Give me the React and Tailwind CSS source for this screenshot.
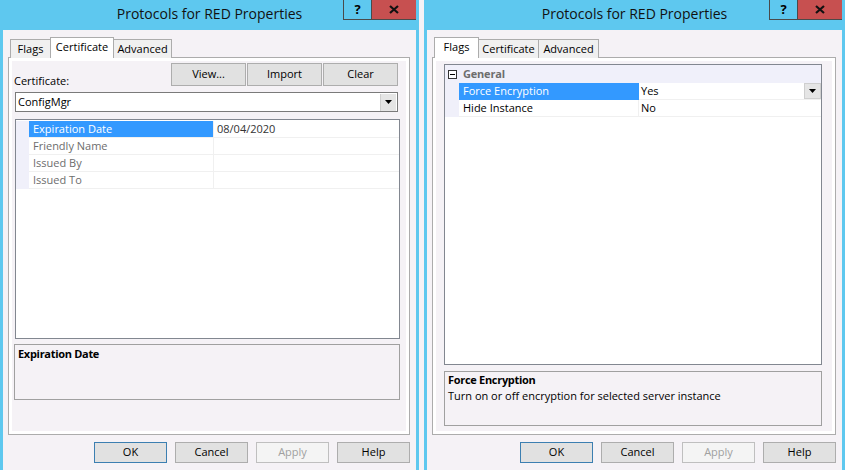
import React from 'react';

// Windows Server 2012 style "Protocols for RED Properties" dialogs

function Caret() {
  return (
    <svg width="7" height="4" viewBox="0 0 7 4">
      <path d="M0 0h7L3.5 4z" fill="#000" />
    </svg>
  );
}

function TitleBar({ title }) {
  return (
    <div className="grid grid-cols-[73px_1fr_73px] h-[30px]">
      <div />
      <div className="text-center text-[14px] leading-[20px] pt-[4px] text-[#111]">{title}</div>
      <div className="flex items-start">
        <div className="w-[28px] h-[20px] border-l border-b border-[#4a4a4a] flex items-center justify-center text-[13px] font-bold text-black">
          ?
        </div>
        <div className="w-[45px] h-[20px] bg-[#c75050] border-b border-l border-[#4a4a4a] flex items-center justify-center">
          <svg width="10" height="9" viewBox="0 0 10 9">
            <path d="M1 1l8 7M9 1L1 8" stroke="#111" strokeWidth="2.2" />
          </svg>
        </div>
      </div>
    </div>
  );
}

function Tabs({ tabs, active }) {
  return (
    <div className="flex items-end h-[21px] ml-[7px]">
      {tabs.map((t, i) =>
        t.name === active ? (
          <div
            key={t.name}
            style={{ width: t.w }}
            className={`relative z-10 h-[21px] bg-white border border-b-0 border-[#acacac] text-center text-[11px] leading-[18px] ${i > 0 ? '-ml-px' : ''}`}
          >
            {t.name}
          </div>
        ) : (
          <div
            key={t.name}
            style={{ width: t.w }}
            className={`h-[19px] bg-[#f0f0f0] border border-b-0 border-[#acacac] text-center text-[11px] leading-[18px] ${i > 0 ? '-ml-px' : ''}`}
          >
            {t.name}
          </div>
        )
      )}
    </div>
  );
}

function Button({ children, kind }) {
  let cls = 'bg-[#e1e1e1] border-[#adadad] text-black';
  if (kind === 'default') cls = 'bg-[#e1e1e1] border-[#3c7fb1] text-black';
  if (kind === 'disabled') cls = 'bg-[#f4f4f4] border-[#bfbfbf] text-[#a0a0a0]';
  return (
    <div className={`w-[73px] h-[21px] border ${cls} flex items-center justify-center text-[11px]`}>
      {children}
    </div>
  );
}

function Footer() {
  return (
    <div className="flex justify-end gap-[8px] pr-[6px] mt-[7px]">
      <Button kind="default">OK</Button>
      <Button>Cancel</Button>
      <Button kind="disabled">Apply</Button>
      <Button>Help</Button>
    </div>
  );
}

function Window({ width, tabs, active, children }) {
  return (
    <div style={{ width }} className="h-full shrink-0 bg-[#5ec8ef] px-[3px] flex flex-col">
      <TitleBar title="Protocols for RED Properties" />
      <div className="flex-1 bg-[#f5f2f6] pt-[7px]">
        <Tabs tabs={tabs} active={active} />
        <div className="-mt-px ml-[5px] mr-[6px] h-[378px] border border-[#acacac] bg-white p-[3px]">
          <div className="h-full bg-[#f5f2f6] flex flex-col">{children}</div>
        </div>
        <Footer />
      </div>
    </div>
  );
}

function CertificatePage() {
  const rows = [
    { label: 'Expiration Date', value: '08/04/2020', selected: true },
    { label: 'Friendly Name', value: '' },
    { label: 'Issued By', value: '' },
    { label: 'Issued To', value: '' },
  ];
  return (
    <>
      <div className="flex justify-between items-end mt-[2px] h-[23px] pl-[2px] pr-[8px]">
        <div className="text-[11px] leading-[14px] -mb-[2px]">Certificate:</div>
        <div className="flex gap-[1px]">
          <div className="w-[75px] h-[23px] bg-[#e1e1e1] border border-[#adadad] flex items-center justify-center text-[11px]">View...</div>
          <div className="w-[75px] h-[23px] bg-[#e1e1e1] border border-[#adadad] flex items-center justify-center text-[11px]">Import</div>
          <div className="w-[75px] h-[23px] bg-[#e1e1e1] border border-[#adadad] flex items-center justify-center text-[11px]">Clear</div>
        </div>
      </div>
      <div className="mt-[6px] ml-[3px] mr-[8px] h-[20px] bg-white border border-[#7a7a7a] flex items-center">
        <div className="flex-1 pl-[2px] text-[11px]">ConfigMgr</div>
        <div className="w-[16px] h-[17px] mr-px bg-[#e5e5e5] border-l border-[#cfcfcf] flex items-center justify-center">
          <Caret />
        </div>
      </div>
      <div className="mt-[7px] ml-[3px] mr-[6px] h-[220px] bg-white border border-[#828790] pt-px">
        {rows.map((r) => (
          <div key={r.label} className="flex h-[17px] text-[11px]">
            <div className="w-[13px] bg-[#f0f0fa]" />
            <div
              className={`w-[185px] pl-[4px] leading-[16px] border-b border-r border-[#f0f0f0] ${
                r.selected ? 'bg-[#3399ff] text-white border-[#3399ff]' : 'text-[#6d6d6d]'
              }`}
            >
              {r.label}
            </div>
            <div className="flex-1 pl-[3px] leading-[16px] border-b border-[#f0f0f0] text-[#333]">{r.value}</div>
          </div>
        ))}
      </div>
      <div className="mt-[5px] ml-[2px] mr-[6px] h-[56px] border border-[#a0a0a0] pl-[3px] pt-px">
        <div className="text-[11px] font-bold leading-[16px] tracking-[-0.3px]">Expiration Date</div>
      </div>
    </>
  );
}

function FlagsPage() {
  return (
    <>
      <div className="mt-[3px] ml-[8px] mr-[10px] h-[301px] bg-white border border-[#828790] text-[11px]">
        <div className="flex h-[18px] bg-[#f0f0fa] items-center">
          <div className="w-[14px] flex justify-center">
            <svg width="9" height="9" viewBox="0 0 9 9">
              <rect x="0.5" y="0.5" width="8" height="8" fill="#fff" stroke="#333" />
              <path d="M2 4.5h5" stroke="#000" />
            </svg>
          </div>
          <div className="pl-[4px] font-bold text-[#6d6d6d] tracking-[-0.2px]">General</div>
        </div>
        <div className="flex h-[17px]">
          <div className="w-[14px] bg-[#f0f0fa]" />
          <div className="w-[180px] pl-[4px] leading-[16px] bg-[#3399ff] text-white">Force Encryption</div>
          <div className="flex-1 flex border-b border-[#f0f0f0]">
            <div className="flex-1 pl-[2px] leading-[16px]">Yes</div>
            <div className="w-[17px] h-[16px] bg-[#e5e5e5] border border-[#cfcfcf] flex items-center justify-center">
              <Caret />
            </div>
          </div>
        </div>
        <div className="flex h-[17px]">
          <div className="w-[14px] bg-[#f0f0fa]" />
          <div className="w-[180px] pl-[4px] leading-[16px] border-b border-r border-[#f0f0f0]">Hide Instance</div>
          <div className="flex-1 pl-[2px] leading-[16px] border-b border-[#f0f0f0]">No</div>
        </div>
      </div>
      <div className="mt-[6px] ml-[8px] mr-[10px] h-[55px] border border-[#a0a0a0] pl-[3px] text-[11px] leading-[16px]">
        <div className="font-bold tracking-[-0.3px]">Force Encryption</div>
        <div>Turn on or off encryption for selected server instance</div>
      </div>
    </>
  );
}

export default function App() {
  return (
    <div className="w-[845px] h-[470px] overflow-hidden bg-[#f5f2f6] flex gap-[5px] font-['Open_Sans','Noto_Sans',sans-serif] text-black">
      <Window
        width={419}
        active="Certificate"
        tabs={[
          { name: 'Flags', w: 41 },
          { name: 'Certificate', w: 64 },
          { name: 'Advanced', w: 59 },
        ]}
      >
        <CertificatePage />
      </Window>
      <Window
        width={421}
        active="Flags"
        tabs={[
          { name: 'Flags', w: 45 },
          { name: 'Certificate', w: 61 },
          { name: 'Advanced', w: 61 },
        ]}
      >
        <FlagsPage />
      </Window>
    </div>
  );
}
